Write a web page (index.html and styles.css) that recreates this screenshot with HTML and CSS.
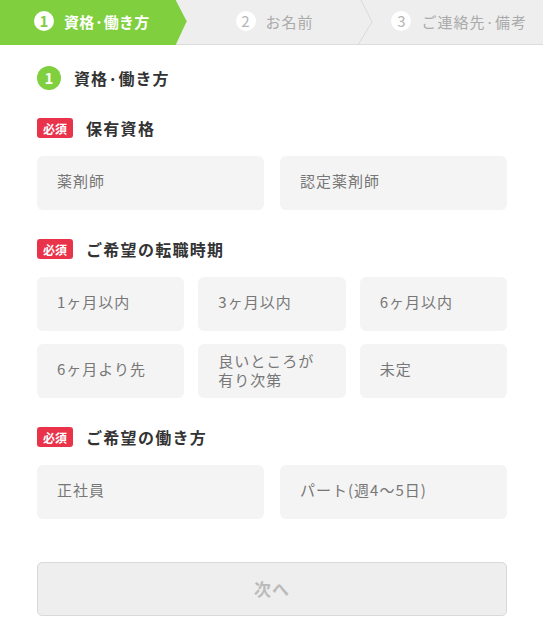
FILE: index.html
```html
<!DOCTYPE html>
<html lang="ja">
<head>
<meta charset="utf-8">
<title>資格·働き方</title>
<link rel="stylesheet" href="styles.css">
</head>
<body>
<div class="stepper">
  <div class="step active">
    <span class="num">1</span><span class="step-label">資格·働き方</span>
  </div>
  <div class="step second">
    <span class="num">2</span><span class="step-label">お名前</span>
    <svg class="chev" width="16" height="45" viewBox="0 0 16 45"><polyline points="4,0 15,22 1,45" fill="none" stroke="#d9d9d9" stroke-width="1"/></svg>
  </div>
  <div class="step third">
    <span class="num">3</span><span class="step-label">ご連絡先·備考</span>
  </div>
</div>

<main class="form">
  <h1 class="title"><span class="title-num">1</span>資格·働き方</h1>

  <section class="group">
    <h2 class="label"><span class="req">必須</span>保有資格</h2>
    <div class="opts cols2">
      <div class="opt">薬剤師</div>
      <div class="opt">認定薬剤師</div>
    </div>
  </section>

  <section class="group">
    <h2 class="label"><span class="req">必須</span>ご希望の転職時期</h2>
    <div class="opts cols3">
      <div class="opt">1ヶ月以内</div>
      <div class="opt">3ヶ月以内</div>
      <div class="opt">6ヶ月以内</div>
      <div class="opt">6ヶ月より先</div>
      <div class="opt two">良いところが<br>有り次第</div>
      <div class="opt">未定</div>
    </div>
  </section>

  <section class="group">
    <h2 class="label"><span class="req">必須</span>ご希望の働き方</h2>
    <div class="opts cols2">
      <div class="opt">正社員</div>
      <div class="opt">パート(週4〜5日)</div>
    </div>
  </section>

  <button class="next" type="button">次へ</button>
</main>
</body>
</html>
```

FILE: styles.css
```css
* { box-sizing: border-box; }
html, body {
  margin: 0;
  padding: 0;
  background: #fff;
  font-family: "Noto Sans CJK JP", "Noto Sans", sans-serif;
  color: #333;
}

.stepper {
  display: flex;
  height: 45px;
  background: #eeeeee;
}
.step {
  flex: 1;
  position: relative;
  display: flex;
  align-items: center;
  justify-content: center;
  height: 45px;
  padding-bottom: 2px;
  border-bottom: 1px solid #dcdcdc;
  color: #aaaaaa;
  font-size: 15px;
  letter-spacing: 1px;
}
.step.second { padding-left: 15px; }
.step.third { padding-left: 17px; }
.step.active {
  padding-left: 8px;
  background: #7fcf3e;
  border-bottom-color: #7fcf3e;
  color: #fff;
  font-weight: 700;
  letter-spacing: 0.3px;
  z-index: 2;
}
.step.active::after {
  content: "";
  position: absolute;
  left: 100%;
  top: 0;
  width: 11px;
  height: 45px;
  background: #7fcf3e;
  clip-path: polygon(0 0, 100% 47%, 0 100%);
}
.chev {
  position: absolute;
  right: -15px;
  top: 0;
  z-index: 1;
}
.num {
  width: 20px;
  height: 20px;
  border-radius: 50%;
  background: #fff;
  color: #b5b5b5;
  font-size: 15px;
  font-weight: 400;
  line-height: 20px;
  text-align: center;
  margin-right: 10px;
  letter-spacing: 0;
  flex: none;
}
.active .num {
  color: #7fcf3e;
  font-weight: 700;
}

.form {
  padding: 21px 36px 30px 37px;
}
.title {
  display: flex;
  align-items: center;
  margin: 0;
  height: 24px;
  font-size: 16px;
  font-weight: 700;
  letter-spacing: 1px;
  color: #333;
}
.title-num {
  width: 24px;
  height: 24px;
  border-radius: 50%;
  background: #7fcf3e;
  color: #fff;
  font-size: 15px;
  line-height: 24px;
  text-align: center;
  letter-spacing: 0;
  margin-right: 13px;
}

.group { margin-top: 28px; }
.group + .group { margin-top: 29px; }

.label {
  display: flex;
  align-items: center;
  margin: 0 0 18px;
  height: 20px;
  font-size: 16px;
  font-weight: 700;
  letter-spacing: 1.3px;
  color: #333;
}
.req {
  display: inline-flex;
  align-items: center;
  justify-content: center;
  width: 36px;
  height: 20px;
  border-radius: 3px;
  background: #e8334a;
  color: #fff;
  font-size: 12px;
  font-weight: 700;
  letter-spacing: 0;
  margin-right: 13px;
}

.opts {
  display: grid;
  gap: 13px 14px;
}
.cols2 { grid-template-columns: 1fr 1fr; column-gap: 16px; }
.cols3 { grid-template-columns: 1fr 1fr 1fr; }
.opt {
  display: flex;
  align-items: center;
  height: 54px;
  padding: 0 12px 6px 20px;
  background: #f4f4f4;
  border-radius: 6px;
  color: #777;
  font-size: 15px;
  letter-spacing: 1px;
}
.opt.two {
  line-height: 19px;
  padding-bottom: 3px;
}

.next {
  display: block;
  width: 100%;
  height: 54px;
  margin-top: 43px;
  background: #eeeeee;
  border: 1px solid #d9d9d9;
  border-radius: 5px;
  color: #bbbbbb;
  font-family: "Noto Sans CJK JP", "Noto Sans", sans-serif;
  font-size: 17px;
  font-weight: 700;
  letter-spacing: 1px;
  padding: 0 0 2px;
}
```
